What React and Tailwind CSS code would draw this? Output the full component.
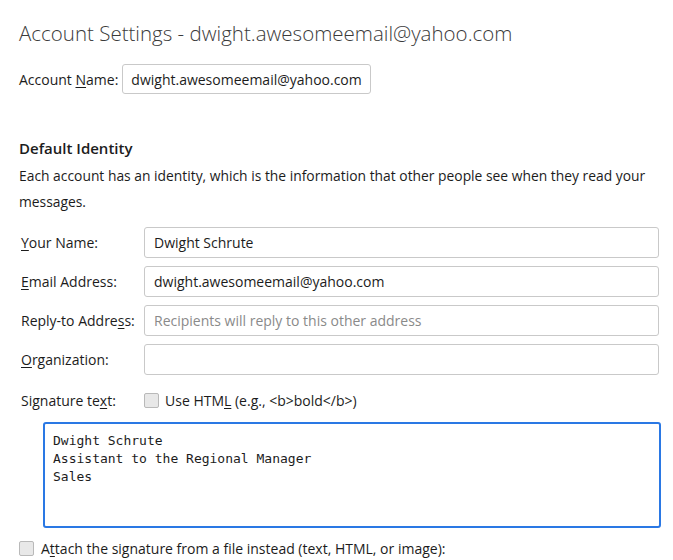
import React from 'react';

const font = { fontFamily: '"Open Sans", "Noto Sans", sans-serif' };

const Key = ({ children }) => <span className="underline underline-offset-2">{children}</span>;

const Field = ({ label, value, placeholder }) => (
  <div className="flex items-center h-[31px]">
    <div className="w-[125px] pl-[2px] text-[14px] text-[#1c1c1c]">{label}</div>
    <div className="w-[515px] h-[31px] border border-[#c9c9c9] rounded-[3px] flex items-center px-[9px] text-[14px]">
      {value ? (
        <span className="text-[#1c1c1c]">{value}</span>
      ) : (
        <span className="text-[#8a8a8a]">{placeholder}</span>
      )}
    </div>
  </div>
);

const Checkbox = () => (
  <div className="w-[15px] h-[15px] rounded-[2px] border border-[#b9b9b9] bg-[#e8e8e8]" />
);

export default function App() {
  return (
    <div className="w-[673px] h-[560px] bg-white overflow-hidden pl-[19px] text-[#1c1c1c]" style={font}>
      <h1 className="pt-[19px] text-[20.5px] leading-[28px] font-light text-[#3b3b3b]">
        Account Settings - dwight.awesomeemail@yahoo.com
      </h1>

      <div className="mt-[17px] flex items-center gap-[4px]">
        <span className="text-[14px]">Account <Key>N</Key>ame:</span>
        <div className="w-[249px] h-[30px] border border-[#c9c9c9] rounded-[3px] flex items-center px-[8px] text-[14px]">
          dwight.awesomeemail@yahoo.com
        </div>
      </div>

      <h2 className="mt-[43px] text-[15px] leading-[22px] font-semibold">Default Identity</h2>
      <p className="mt-[4px] pr-[20px] text-[13.85px] leading-[26px]">
        Each account has an identity, which is the information that other people see when they read your messages.
      </p>

      <div className="mt-[12px] flex flex-col gap-[8px]">
        <Field label={<><Key>Y</Key>our Name:</>} value="Dwight Schrute" />
        <Field label={<><Key>E</Key>mail Address:</>} value="dwight.awesomeemail@yahoo.com" />
        <Field label={<>Reply-to Addre<Key>s</Key>s:</>} placeholder="Recipients will reply to this other address" />
        <Field label={<><Key>O</Key>rganization:</>} />
      </div>

      <div className="mt-[16px] flex items-center h-[18px]">
        <div className="w-[125px] pl-[2px] text-[14px]">Signature te<Key>x</Key>t:</div>
        <Checkbox />
        <span className="ml-[6px] text-[14px]">Use HTM<Key>L</Key> (e.g., &lt;b&gt;bold&lt;/b&gt;)</span>
      </div>

      <div
        className="mt-[13px] ml-[24px] w-[618px] h-[106px] border-2 border-[#2a78e4] rounded-[3px] pl-[8px] pt-[8px] text-[13px] leading-[18px] whitespace-pre"
        style={{ fontFamily: '"DejaVu Sans Mono", "Liberation Mono", monospace' }}
      >
        {'Dwight Schrute\nAssistant to the Regional Manager\nSales'}
      </div>

      <div className="mt-[10px] flex items-center gap-[7px]">
        <Checkbox />
        <span className="text-[14px]">A<Key>t</Key>tach the signature from a file instead (text, HTML, or image):</span>
      </div>
    </div>
  );
}
